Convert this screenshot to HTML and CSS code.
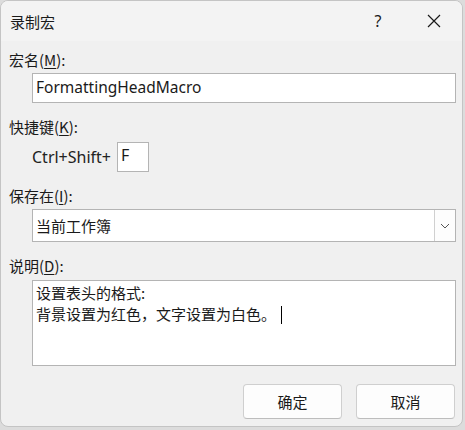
FILE: index.html
```html
<!DOCTYPE html>
<html lang="zh-CN">
<head>
<meta charset="utf-8">
<link rel="stylesheet" href="styles.css">
</head>
<body>
<div class="dialog">
  <div class="titlebar">
    <div class="title">录制宏</div>
    <div class="help">?</div>
    <div class="close">
      <svg width="14" height="14" viewBox="0 0 14 14"><path d="M1 1 L13 13 M13 1 L1 13" stroke="#1a1a1a" stroke-width="1.2" fill="none"/></svg>
    </div>
  </div>
  <div class="content">
    <div class="label l-name">宏名(<u>M</u>):</div>
    <div class="field f-name">FormattingHeadMacro</div>

    <div class="label l-key">快捷键(<u>K</u>):</div>
    <div class="keyrow">
      <span class="keytext">Ctrl+Shift+</span>
      <div class="field f-key">F</div>
    </div>

    <div class="label l-store">保存在(<u>I</u>):</div>
    <div class="select">
      <div class="select-text">当前工作簿</div>
      <div class="select-btn">
        <svg width="10" height="6" viewBox="0 0 10 6"><path d="M1 1 L5 5 L9 1" stroke="#555" stroke-width="1" fill="none"/></svg>
      </div>
    </div>

    <div class="label l-desc">说明(<u>D</u>):</div>
    <div class="textarea">
      <div>设置表头的格式:</div>
      <div>背景设置为红色，文字设置为白色。<span class="caret"></span></div>
    </div>

    <div class="buttons">
      <div class="btn">确定</div>
      <div class="btn">取消</div>
    </div>
  </div>
</div>
</body>
</html>
```
FILE: styles.css
```css
html, body {
  margin: 0;
  padding: 0;
}
body {
  width: 465px;
  height: 430px;
  background: #dcdcdc;
  font-family: "Noto Sans", "Noto Sans CJK SC", sans-serif;
  color: #1a1a1a;
  overflow: hidden;
}
.dialog {
  width: 463px;
  height: 427px;
  background: #f0f0f0;
  border: 1px solid #c4c4c4;
  border-radius: 8px;
  box-sizing: border-box;
  overflow: hidden;
}
.titlebar {
  height: 40px;
  display: flex;
  align-items: center;
  background: #f3f3f3;
}
.title {
  flex: 1;
  padding-left: 9px;
  font-size: 15px;
  font-family: "Noto Sans CJK SC", sans-serif;
}
.help {
  width: 30px;
  text-align: center;
  font-size: 16px;
  margin-right: 26px;
  font-family: "Noto Sans", sans-serif;
}
.close {
  width: 30px;
  display: flex;
  justify-content: center;
  margin-right: 13px;
}
.content {
  padding: 9px 6px 0 8px;
  display: flex;
  flex-direction: column;
}
.label {
  font-size: 15px;
  line-height: 20px;
  height: 20px;
  font-family: "Noto Sans CJK SC", sans-serif;
}
.label u {
  text-decoration-thickness: 1px;
  text-underline-offset: 2px;
}
.field {
  background: #fff;
  border: 1px solid #b4b4b4;
  box-sizing: border-box;
}
.f-name {
  margin: 3px 0 0 23px;
  height: 30px;
  width: 424px;
  padding: 0 0 0 3px;
  font-size: 15.5px;
  line-height: 27px;
  font-family: "Noto Sans", sans-serif;
}
.l-key { margin-top: 14px; }
.keyrow {
  display: flex;
  align-items: center;
  margin: 5px 0 0 23px;
}
.keytext {
  font-size: 16px;
  width: 85px;
  font-family: "Noto Sans", sans-serif;
  color: #222;
}
.f-key {
  width: 32px;
  height: 30px;
  padding-left: 3px;
  font-size: 16px;
  line-height: 24px;
  font-family: "Noto Sans", sans-serif;
}
.l-store { margin-top: 14px; }
.select {
  margin: 3px 0 0 23px;
  width: 424px;
  height: 33px;
  background: #fff;
  border: 1px solid #b4b4b4;
  box-sizing: border-box;
  display: flex;
}
.select-text {
  flex: 1;
  padding-left: 3px;
  font-size: 15px;
  line-height: 31px;
  font-family: "Noto Sans CJK SC", sans-serif;
}
.select-btn {
  width: 20px;
  border-left: 1px solid #d0d0d0;
  background: #fdfdfd;
  display: flex;
  align-items: center;
  justify-content: center;
}
.l-desc { margin-top: 14px; }
.textarea {
  margin: 4px 0 0 23px;
  width: 424px;
  height: 86px;
  background: #fff;
  border: 1px solid #b4b4b4;
  box-sizing: border-box;
  padding: 1px 0 0 3px;
  font-size: 15px;
  line-height: 21px;
  font-family: "Noto Sans CJK SC", sans-serif;
}
.caret {
  display: inline-block;
  width: 0;
  height: 18px;
  border-left: 1px solid #000;
  margin-left: 5px;
  vertical-align: -4px;
}
.buttons {
  display: flex;
  justify-content: flex-end;
  gap: 14px;
  margin-top: 18px;
  padding-right: 1px;
}
.btn {
  width: 99px;
  height: 35px;
  box-sizing: border-box;
  background: #fdfdfd;
  border: 1px solid #cfcfcf;
  border-bottom-color: #bdbdbd;
  border-radius: 4px;
  font-size: 15px;
  line-height: 33px;
  text-align: center;
  font-family: "Noto Sans CJK SC", sans-serif;
}
```
